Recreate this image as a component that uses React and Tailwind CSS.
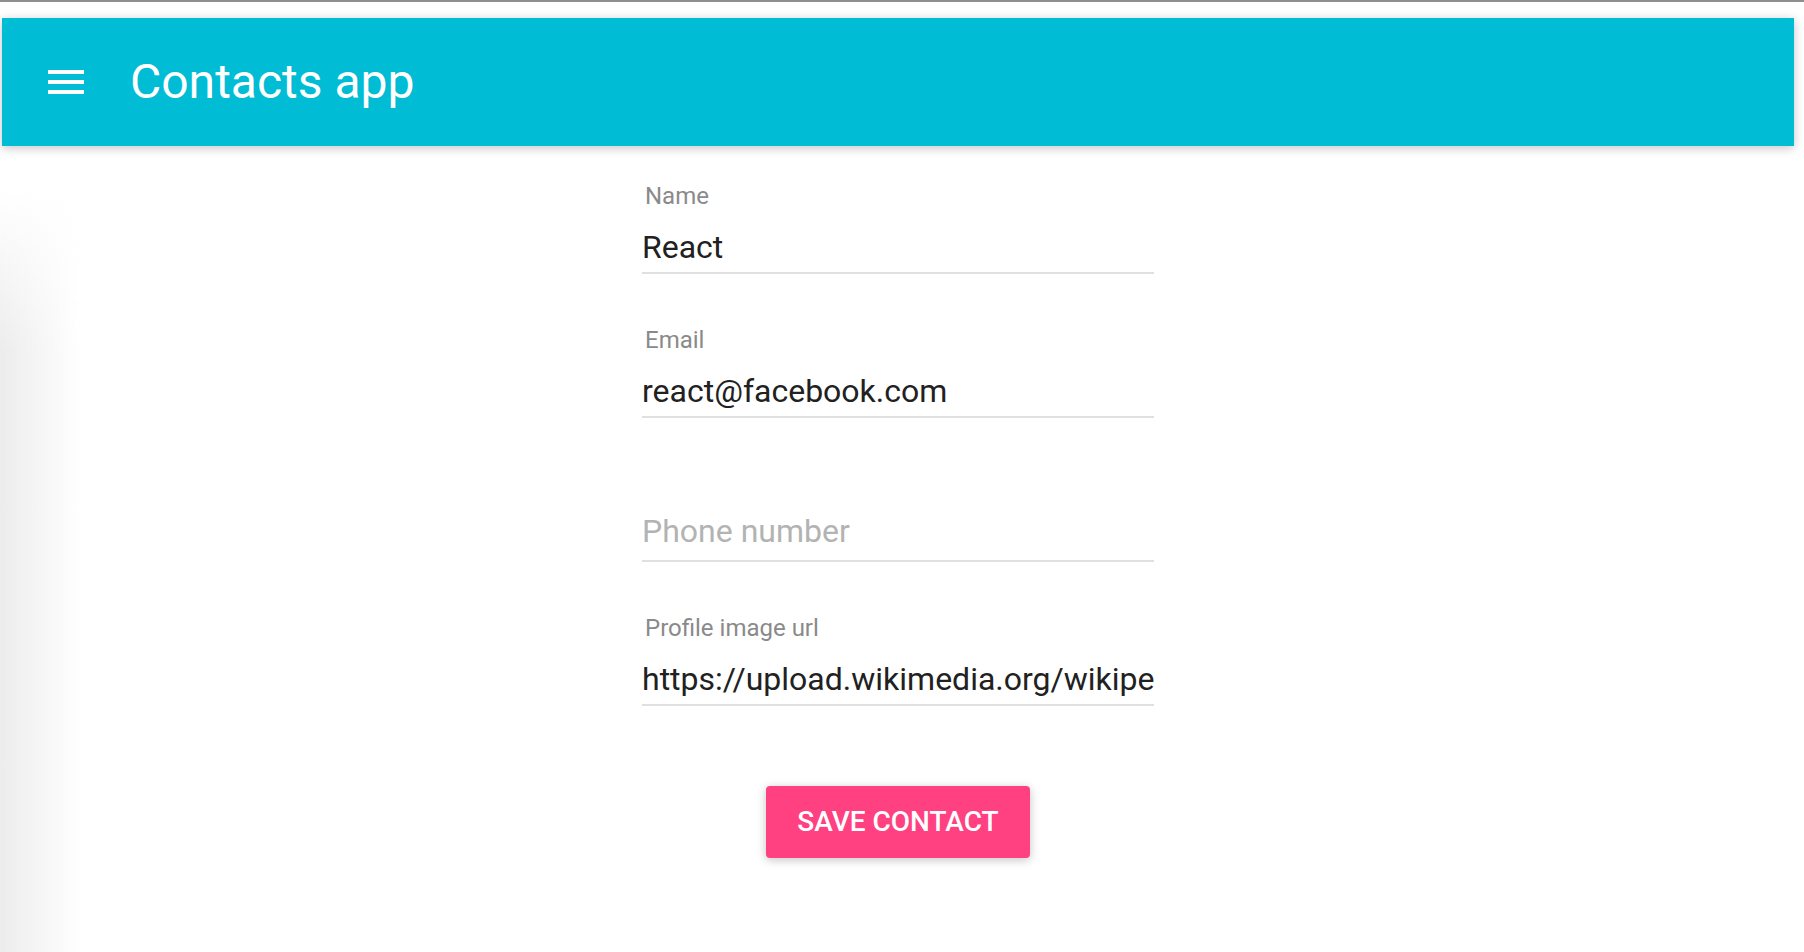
import { useState } from "react";

const fields = [
    { name: "name", label: "Name", value: "React" },
    { name: "email", label: "Email", value: "react@facebook.com" },
    { name: "phone", label: "Phone number", value: "" },
    { name: "image", label: "Profile image url", value: "https://upload.wikimedia.org/wikipedia/commons/a/a7/React-icon.svg" },
];

function MenuIcon() {
    return (
        <svg width="48" height="48" viewBox="0 0 24 24" fill="#ffffff">
            <path d="M3 18h18v-2H3v2zm0-5h18v-2H3v2zm0-7v2h18V6H3z" />
        </svg>
    );
}

function TextField({ label, value, onChange }) {
    const floating = value.length > 0;

    return (
        <div className="relative flex h-[144px] w-[512px] flex-col">
            {floating ? (
                <>
                    <label className="mt-[34px] h-[33px] pl-[3px] text-[24px] leading-[33px] text-[#8a8a8a]">{label}</label>
                    <input
                        className="mt-[10px] h-[48px] w-full bg-transparent text-[32px] leading-[48px] text-[#212121] outline-none"
                        value={value}
                        onChange={onChange}
                    />
                </>
            ) : (
                <>
                    <label className="absolute left-0 top-[75px] text-[32px] leading-[44px] text-[#b3b3b3]">{label}</label>
                    <input
                        className="mt-[77px] h-[48px] w-full bg-transparent text-[32px] leading-[48px] text-[#212121] outline-none"
                        value={value}
                        onChange={onChange}
                    />
                </>
            )}
            <div className="mt-[1px] h-[2px] w-full bg-[#e0e0e0]" />
        </div>
    );
}

export default function App() {
    const [form, setForm] = useState(
        Object.fromEntries(fields.map(f => [f.name, f.value]))
    );

    return (
        <div className="relative min-h-[952px] overflow-hidden bg-white font-['Roboto',sans-serif]">
            <div className="h-[2px] bg-[#8e8e8e]" />

            {/* drawer shadow peeking in from the left */}
            <div className="absolute bottom-0 left-0 top-[190px] w-[80px] bg-linear-to-r from-[#ececec] to-transparent [mask-image:linear-gradient(to_bottom,transparent,black_160px)]" />

            <div className="relative ml-[2px] mt-[16px] w-[1792px]">
                <header className="flex h-[128px] items-center bg-[#00bcd4] pl-[40px] shadow-[0_2px_12px_rgba(0,0,0,0.12),0_2px_8px_rgba(0,0,0,0.12)]">
                    <button className="flex h-[48px] w-[48px] items-center justify-center">
                        <MenuIcon />
                    </button>
                    <h1 className="ml-[40px] text-[48px] font-normal leading-[128px] text-white">Contacts app</h1>
                </header>

                <form className="mx-auto flex w-[512px] flex-col items-center" onSubmit={e => e.preventDefault()}>
                    {fields.map(f => (
                        <TextField
                            key={f.name}
                            label={f.label}
                            value={form[f.name]}
                            onChange={e => setForm({ ...form, [f.name]: e.target.value })}
                        />
                    ))}
                    <button
                        type="submit"
                        className="mt-[64px] h-[72px] rounded-[4px] bg-[#ff4081] px-[31px] text-[28px] font-medium uppercase text-white shadow-[0_2px_12px_rgba(0,0,0,0.12),0_2px_8px_rgba(0,0,0,0.12)]"
                    >
                        Save contact
                    </button>
                </form>
            </div>
        </div>
    );
}
